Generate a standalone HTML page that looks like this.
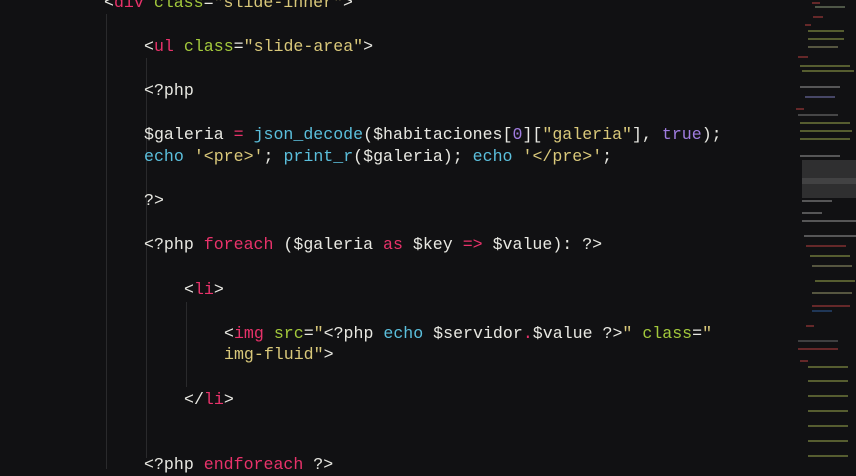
<!DOCTYPE html>
<html><head><meta charset="utf-8"><style>
html,body{margin:0;padding:0;background:#111113;width:856px;height:469px;overflow:hidden}
.c{position:absolute;left:0;top:0;width:856px;height:469px;font-family:"Liberation Mono",monospace;font-size:16.6px;color:#e8e8e2}
.l{position:absolute;white-space:pre;line-height:22px;height:22px}
.t{color:#e8326a}.a{color:#a3c93c}.s{color:#d9c87a}.f{color:#5bbfdc}.k{color:#e8326a}
.g{position:absolute;width:1px;background:#2a2a2c}
.mm{position:absolute;left:0;top:0}
.mm i{position:absolute;height:1.5px;opacity:.45;display:block}
</style></head><body><div class="c">
<div class="g" style="left:106px;top:14px;height:455px"></div>
<div class="g" style="left:146px;top:58px;height:400px"></div>
<div class="g" style="left:186px;top:302px;height:85px"></div>
<div class="l" style="left:104px;top:-8px">&lt;<span class="t">div</span> <span class="a">class</span>=<span class="s">"slide-inner"</span>&gt;</div>
<div class="l" style="left:144px;top:36px">&lt;<span class="t">ul</span> <span class="a">class</span>=<span class="s">"slide-area"</span>&gt;</div>
<div class="l" style="left:144px;top:80px">&lt;?php</div>
<div class="l" style="left:144px;top:124px">$galeria <span class="k">=</span> <span class="f">json_decode</span>($habitaciones[<span style="color:#a07ce0">0</span>][<span class="s">"galeria"</span>], <span style="color:#a07ce0">true</span>);</div>
<div class="l" style="left:144px;top:146px"><span class="f">echo</span> <span class="s">'&lt;pre&gt;'</span>; <span class="f">print_r</span>($galeria); <span class="f">echo</span> <span class="s">'&lt;/pre&gt;'</span>;</div>
<div class="l" style="left:144px;top:190px">?&gt;</div>
<div class="l" style="left:144px;top:234px">&lt;?php <span class="k">foreach</span> ($galeria <span class="k">as</span> $key <span class="k">=&gt;</span> $value): ?&gt;</div>
<div class="l" style="left:184px;top:279px">&lt;<span class="t">li</span>&gt;</div>
<div class="l" style="left:224px;top:323px">&lt;<span class="t">img</span> <span class="a">src</span>=<span class="s">"</span>&lt;?php <span class="f">echo</span> $servidor<span class="k">.</span>$value ?&gt;<span class="s">"</span> <span class="a">class</span>=<span class="s">"</span></div>
<div class="l" style="left:224px;top:344px"><span class="s">img-fluid"</span>&gt;</div>
<div class="l" style="left:184px;top:389px">&lt;/<span class="t">li</span>&gt;</div>
<div class="l" style="left:144px;top:454px">&lt;?php <span class="k">endforeach</span> ?&gt;</div>
<div class="mm">
<i style="left:812px;top:2px;width:8px;background:#c44"></i>
<i style="left:815px;top:6px;width:30px;background:#9a8"></i>
<i style="left:813px;top:16px;width:10px;background:#c44"></i>
<i style="left:805px;top:24px;width:6px;background:#c44"></i>
<i style="left:808px;top:30px;width:36px;background:#ab5"></i>
<i style="left:808px;top:38px;width:36px;background:#ab5"></i>
<i style="left:808px;top:46px;width:30px;background:#aa7"></i>
<i style="left:798px;top:56px;width:10px;background:#c44"></i>
<i style="left:800px;top:65px;width:50px;background:#ab5"></i>
<i style="left:802px;top:70px;width:52px;background:#ab5"></i>
<i style="left:800px;top:86px;width:40px;background:#aaa"></i>
<i style="left:805px;top:96px;width:30px;background:#88c"></i>
<i style="left:796px;top:108px;width:8px;background:#c44"></i>
<i style="left:798px;top:114px;width:40px;background:#888"></i>
<i style="left:800px;top:122px;width:50px;background:#ab5"></i>
<i style="left:800px;top:130px;width:52px;background:#ab5"></i>
<i style="left:800px;top:138px;width:50px;background:#ab5"></i>
<i style="left:800px;top:155px;width:40px;background:#aaa"></i>
<i style="left:802px;top:160px;width:54px;height:24px;background:#666;opacity:.35"></i>
<i style="left:802px;top:178px;width:54px;height:20px;background:#666;opacity:.35"></i>
<i style="left:802px;top:200px;width:30px;background:#aaa"></i>
<i style="left:802px;top:212px;width:20px;background:#aaa"></i>
<i style="left:802px;top:220px;width:54px;background:#aaa"></i>
<i style="left:804px;top:235px;width:54px;background:#aaa"></i>
<i style="left:806px;top:245px;width:40px;background:#c44"></i>
<i style="left:810px;top:255px;width:40px;background:#ab5"></i>
<i style="left:812px;top:265px;width:40px;background:#aa7"></i>
<i style="left:815px;top:280px;width:40px;background:#ab5"></i>
<i style="left:812px;top:292px;width:40px;background:#aa7"></i>
<i style="left:812px;top:305px;width:38px;background:#c44"></i>
<i style="left:812px;top:310px;width:20px;background:#36a"></i>
<i style="left:806px;top:325px;width:8px;background:#c44"></i>
<i style="left:798px;top:340px;width:40px;background:#777"></i>
<i style="left:798px;top:348px;width:40px;background:#c44"></i>
<i style="left:800px;top:360px;width:8px;background:#c44"></i>
<i style="left:808px;top:366px;width:40px;background:#ab5"></i>
<i style="left:808px;top:380px;width:40px;background:#ab5"></i>
<i style="left:808px;top:395px;width:40px;background:#ab5"></i>
<i style="left:808px;top:410px;width:40px;background:#ab5"></i>
<i style="left:808px;top:425px;width:40px;background:#ab5"></i>
<i style="left:808px;top:440px;width:40px;background:#ab5"></i>
<i style="left:808px;top:455px;width:40px;background:#ab5"></i>
</div>
</div></body></html>
